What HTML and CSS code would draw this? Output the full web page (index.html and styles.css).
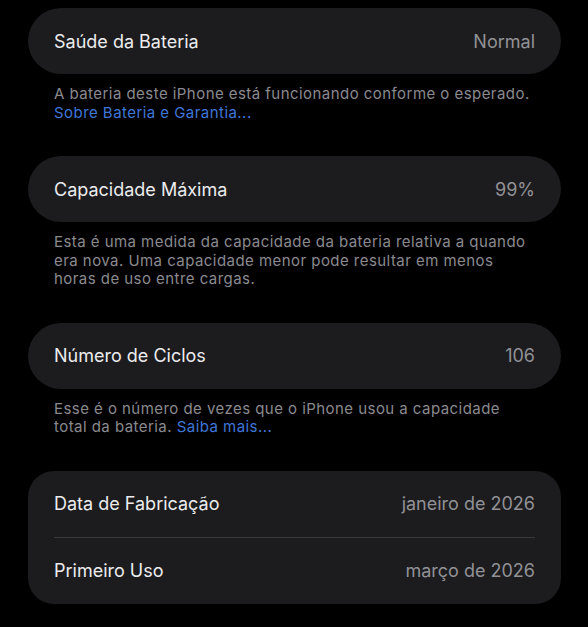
FILE: index.html
```html
<!DOCTYPE html>
<html lang="pt-BR">
<head>
  <meta charset="UTF-8">
  <meta name="viewport" content="width=device-width, initial-scale=1.0">
  <title>Saúde da Bateria</title>
  <link rel="stylesheet" href="styles.css">
</head>
<body>
  <div class="page">
    <div class="group">
      <div class="row">
        <span class="label">Saúde da Bateria</span>
        <span class="value">Normal</span>
      </div>
    </div>
    <p class="note">A bateria deste iPhone está funcionando conforme o esperado.<br>
      <a href="#" class="link">Sobre Bateria e Garantia...</a></p>

    <div class="group">
      <div class="row">
        <span class="label">Capacidade Máxima</span>
        <span class="value">99%</span>
      </div>
    </div>
    <p class="note">Esta é uma medida da capacidade da bateria relativa a quando era nova. Uma capacidade menor pode resultar em menos horas de uso entre cargas.</p>

    <div class="group">
      <div class="row">
        <span class="label">Número de Ciclos</span>
        <span class="value">106</span>
      </div>
    </div>
    <p class="note">Esse é o número de vezes que o iPhone usou a capacidade total da bateria. <a href="#" class="link">Saiba mais...</a></p>

    <div class="group group-multi">
      <div class="row">
        <span class="label">Data de Fabricação</span>
        <span class="value">janeiro de 2026</span>
      </div>
      <div class="row">
        <span class="label">Primeiro Uso</span>
        <span class="value">março de 2026</span>
      </div>
    </div>
  </div>
</body>
</html>
```

FILE: styles.css
```css
* { box-sizing: border-box; }
body { margin: 0; background: #000; font-family: Inter, 'Noto Sans', sans-serif; -webkit-font-smoothing: antialiased; }
.page { padding: 8px 27px 0 28px; }

.group { background: #1c1c1e; border-radius: 33px; }
.group-multi { border-radius: 26px; }
.row { display: flex; justify-content: space-between; align-items: center; height: 66px; padding: 0 26px; }
.group-multi .row + .row { border-top: 1px solid #38383a; height: 67px; margin: 0 26px; padding: 0; }
.group-multi .row:first-child { padding-bottom: 1px; }

.label { color: #ececee; font-size: 18px; font-weight: 400; letter-spacing: 0; }
.value { color: #919196; font-size: 18px; letter-spacing: 0; }

.note { margin: 0; padding: 11px 30px 34px 26px; color: #8a8a8f; font-size: 15px; line-height: 18.5px; letter-spacing: 0.45px; }
.link { color: #3f77d8; text-decoration: none; }
```
